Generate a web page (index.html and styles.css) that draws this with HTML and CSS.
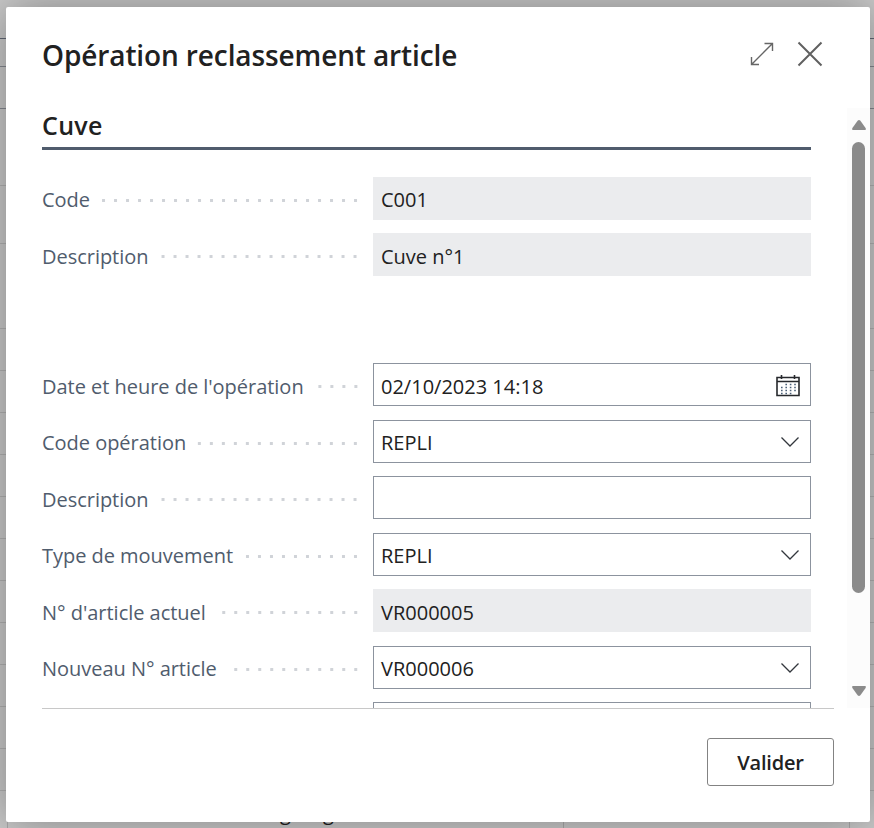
FILE: index.html
```html
<!DOCTYPE html>
<html lang="fr">
<head>
    <meta charset="UTF-8">
    <meta name="viewport" content="width=device-width, initial-scale=1.0">
    <title>Opération reclassement article</title>
    <link rel="stylesheet" href="styles.css">
</head>
<body>

<!-- Page en arrière-plan -->
<div class="page">
    <div class="page-row row-title"></div>
    <div class="page-row row-menu"></div>
    <div class="page-row row-actions"></div>
    <div class="page-row row-group"></div>
    <div class="page-row row-filter"></div>
    <div class="page-row row-head"></div>
    <div class="page-row"></div>
    <div class="page-row"></div>
    <div class="page-row"></div>
    <div class="page-row"></div>
    <div class="page-row"></div>
    <div class="page-row"></div>
    <div class="page-row"></div>
    <div class="page-row"></div>
    <div class="page-row"></div>
    <div class="page-row"></div>
    <div class="page-row"></div>
    <div class="page-cells">
        <div class="cell cell-edge"></div>
        <div class="cell cell-name"><span>g</span><span>g</span></div>
        <div class="cell cell-value"></div>
    </div>
</div>

<!-- Boîte de dialogue -->
<div class="dialog">
    <div class="header">
        <h1>Opération reclassement article</h1>
        <svg class="icon-expand" width="24" height="24" viewBox="0 0 24 24">
            <path d="M2 22L22 2M14.5 1.5H22.5V9M1.5 15V22.5H9"/>
        </svg>
        <svg class="icon-close" width="26" height="26" viewBox="0 0 26 26">
            <path d="M1.5 1.5L24.5 24.5M24.5 1.5L1.5 24.5"/>
        </svg>
    </div>

    <div class="body">
        <div class="content">
            <h2>Cuve</h2>

            <div class="group">
                <div class="field">
                    <label>Code</label><span class="dots"></span>
                    <div class="value readonly">C001</div>
                </div>
                <div class="field">
                    <label>Description</label><span class="dots"></span>
                    <div class="value readonly">Cuve n°1</div>
                </div>
            </div>

            <div class="group">
                <div class="field">
                    <label>Date et heure de l'opération</label><span class="dots"></span>
                    <div class="value">02/10/2023 14:18
                        <svg class="icon-calendar" width="24" height="22" viewBox="0 0 24 22">
                            <path d="M1 2.5H23V20.5H1ZM1 6.5H23M5.5 0V4M18.5 0V4"/>
                            <path class="days" d="M9.4 9.5H20M5 12.5H20M5 15.5H20M5 18.5H16"/>
                        </svg>
                    </div>
                </div>
                <div class="field">
                    <label>Code opération</label><span class="dots"></span>
                    <div class="value">REPLI
                        <svg class="icon-chevron" width="20" height="12" viewBox="0 0 20 12"><path d="M1.5 1.5L10 10L18.5 1.5"/></svg>
                    </div>
                </div>
                <div class="field">
                    <label>Description</label><span class="dots"></span>
                    <div class="value"></div>
                </div>
                <div class="field">
                    <label>Type de mouvement</label><span class="dots"></span>
                    <div class="value">REPLI
                        <svg class="icon-chevron" width="20" height="12" viewBox="0 0 20 12"><path d="M1.5 1.5L10 10L18.5 1.5"/></svg>
                    </div>
                </div>
                <div class="field">
                    <label>N° d'article actuel</label><span class="dots"></span>
                    <div class="value readonly">VR000005</div>
                </div>
                <div class="field">
                    <label>Nouveau N° article</label><span class="dots"></span>
                    <div class="value">VR000006
                        <svg class="icon-chevron" width="20" height="12" viewBox="0 0 20 12"><path d="M1.5 1.5L10 10L18.5 1.5"/></svg>
                    </div>
                </div>
                <div class="field">
                    <label></label>
                    <div class="value"></div>
                </div>
            </div>
        </div>

        <div class="scrollbar">
            <svg width="14" height="10" viewBox="0 0 14 10"><path d="M5.6 .8Q7-.8 8.4 .8L13.6 8Q14.4 10 13 10H1Q-.4 10 .4 8Z"/></svg>
            <div class="thumb"></div>
            <svg width="14" height="10" viewBox="0 0 14 10"><path d="M5.6 9.2Q7 10.8 8.4 9.2L13.6 2Q14.4 0 13 0H1Q-.4 0 .4 2Z"/></svg>
        </div>
    </div>

    <div class="footer">
        <button class="btn">Valider</button>
    </div>
</div>

</body>
</html>
```

FILE: styles.css
```css
* {
    box-sizing: border-box;
    font-family: "Open Sans", "Noto Sans", sans-serif;
}

body {
    margin: 0;
    width: 874px;
    height: 828px;
    overflow: hidden;
    position: relative;
    background-color: #cacaca;
    color: #212121;
}

/* Page en arrière-plan */
.page {
    display: flex;
    flex-direction: column;
    height: 828px;
}

.page-row {
    height: 42px;
    flex-shrink: 0;
    border-bottom: 1px solid #b2b2b2;
}

.row-title {
    height: 39px;
    border-color: #616875;
}

.row-menu {
    height: 28px;
    border-color: #858990;
}

.row-actions {
    border-color: #858990;
}

.row-group {
    height: 77px;
}

.row-filter {
    height: 58px;
}

.row-head {
    height: 85px;
}

.page-cells {
    display: flex;
    height: 37px;
}

.cell {
    border-right: 1px solid #aaa;
}

.cell-edge {
    width: 8px;
}

.cell-name {
    width: 556px;
    padding-left: 272px;
    font-size: 20px;
    line-height: 44px;
}

.cell-name span {
    display: inline-block;
    width: 43px;
}

.cell-value {
    width: 286px;
}

/* Boîte de dialogue */
.dialog {
    position: absolute;
    left: 6px;
    top: 7px;
    width: 864px;
    height: 815px;
    display: flex;
    flex-direction: column;
    background: #fff;
    border-radius: 2px;
    box-shadow: 0 0 48px rgba(0, 0, 0, 0.36);
}

.header {
    display: flex;
    align-items: center;
    height: 101px;
    padding: 0 47px 7px 36px;
}

.header h1 {
    flex: 1;
    margin: 0;
    padding-top: 2px;
    font-size: 28px;
    font-weight: 550;
    letter-spacing: -0.11px;
    white-space: nowrap;
}

svg {
    display: block;
    fill: none;
    flex-shrink: 0;
}

.icon-expand {
    margin-right: 23px;
    stroke: #666;
    stroke-width: 1.4;
}

.icon-close {
    stroke: #606060;
    stroke-width: 2;
}

.body {
    display: flex;
    height: 600px;
    overflow: hidden;
}

.content {
    width: 769px;
    margin-left: 36px;
}

.content h2 {
    margin: 0 0 26.8px;
    height: 42px;
    line-height: 35px;
    font-size: 25px;
    font-weight: 550;
    letter-spacing: 0.3px;
    border-bottom: 3px solid #505c6d;
}

.group {
    margin-bottom: 87px;
}

.field {
    display: flex;
    align-items: center;
    height: 43px;
    margin-bottom: 13.5px;
    font-size: 20px;
}

.field label {
    color: #505c6d;
    font-weight: 370;
    letter-spacing: -0.03px;
    white-space: nowrap;
    padding-top: 3px;
}

.dots {
    flex: 1;
    height: 3px;
    margin: 4px 13px 0 11px;
    background: radial-gradient(circle at 7.5px 1.5px, #d0d3d8 1.4px, transparent 2px) right top / 12px 3px repeat-x;
}

.value {
    display: flex;
    align-items: center;
    justify-content: space-between;
    width: 438px;
    height: 43px;
    margin-left: auto;
    padding: 3px 10px 0 7px;
    border: 1px solid #8c939e;
}

.readonly {
    background-color: #ebecee;
    border-color: #ebecee;
}

.icon-chevron {
    margin-top: -2px;
    stroke: #33373d;
    stroke-width: 1.3;
}

.icon-calendar {
    stroke: #26282c;
    stroke-width: 1.6;
}

.icon-calendar .days {
    stroke: #4b6078;
    stroke-width: 1.4;
    stroke-dasharray: 1.6 2.8;
}

/* Barre de défilement */
.scrollbar {
    display: flex;
    flex-direction: column;
    align-items: center;
    width: 23px;
    height: 600px;
    margin-left: auto;
    padding-top: 12px;
    background-color: #fcfcfc;
}

.scrollbar svg {
    fill: #8b8b8b;
}

.thumb {
    width: 13px;
    height: 451px;
    margin: 12px 0 93px;
    border-radius: 7px;
    background-color: #8b8b8b;
}

/* Bouton d'action */
.footer {
    display: flex;
    justify-content: flex-end;
    margin: 0 36px;
    padding-top: 29px;
    border-top: 1px solid #c8c8c8;
}

.btn {
    width: 127px;
    height: 48px;
    border: 1px solid #838383;
    border-radius: 3px;
    background-color: #fff;
    color: #212121;
    font-size: 20px;
    font-weight: 550;
    letter-spacing: -0.2px;
}
```
